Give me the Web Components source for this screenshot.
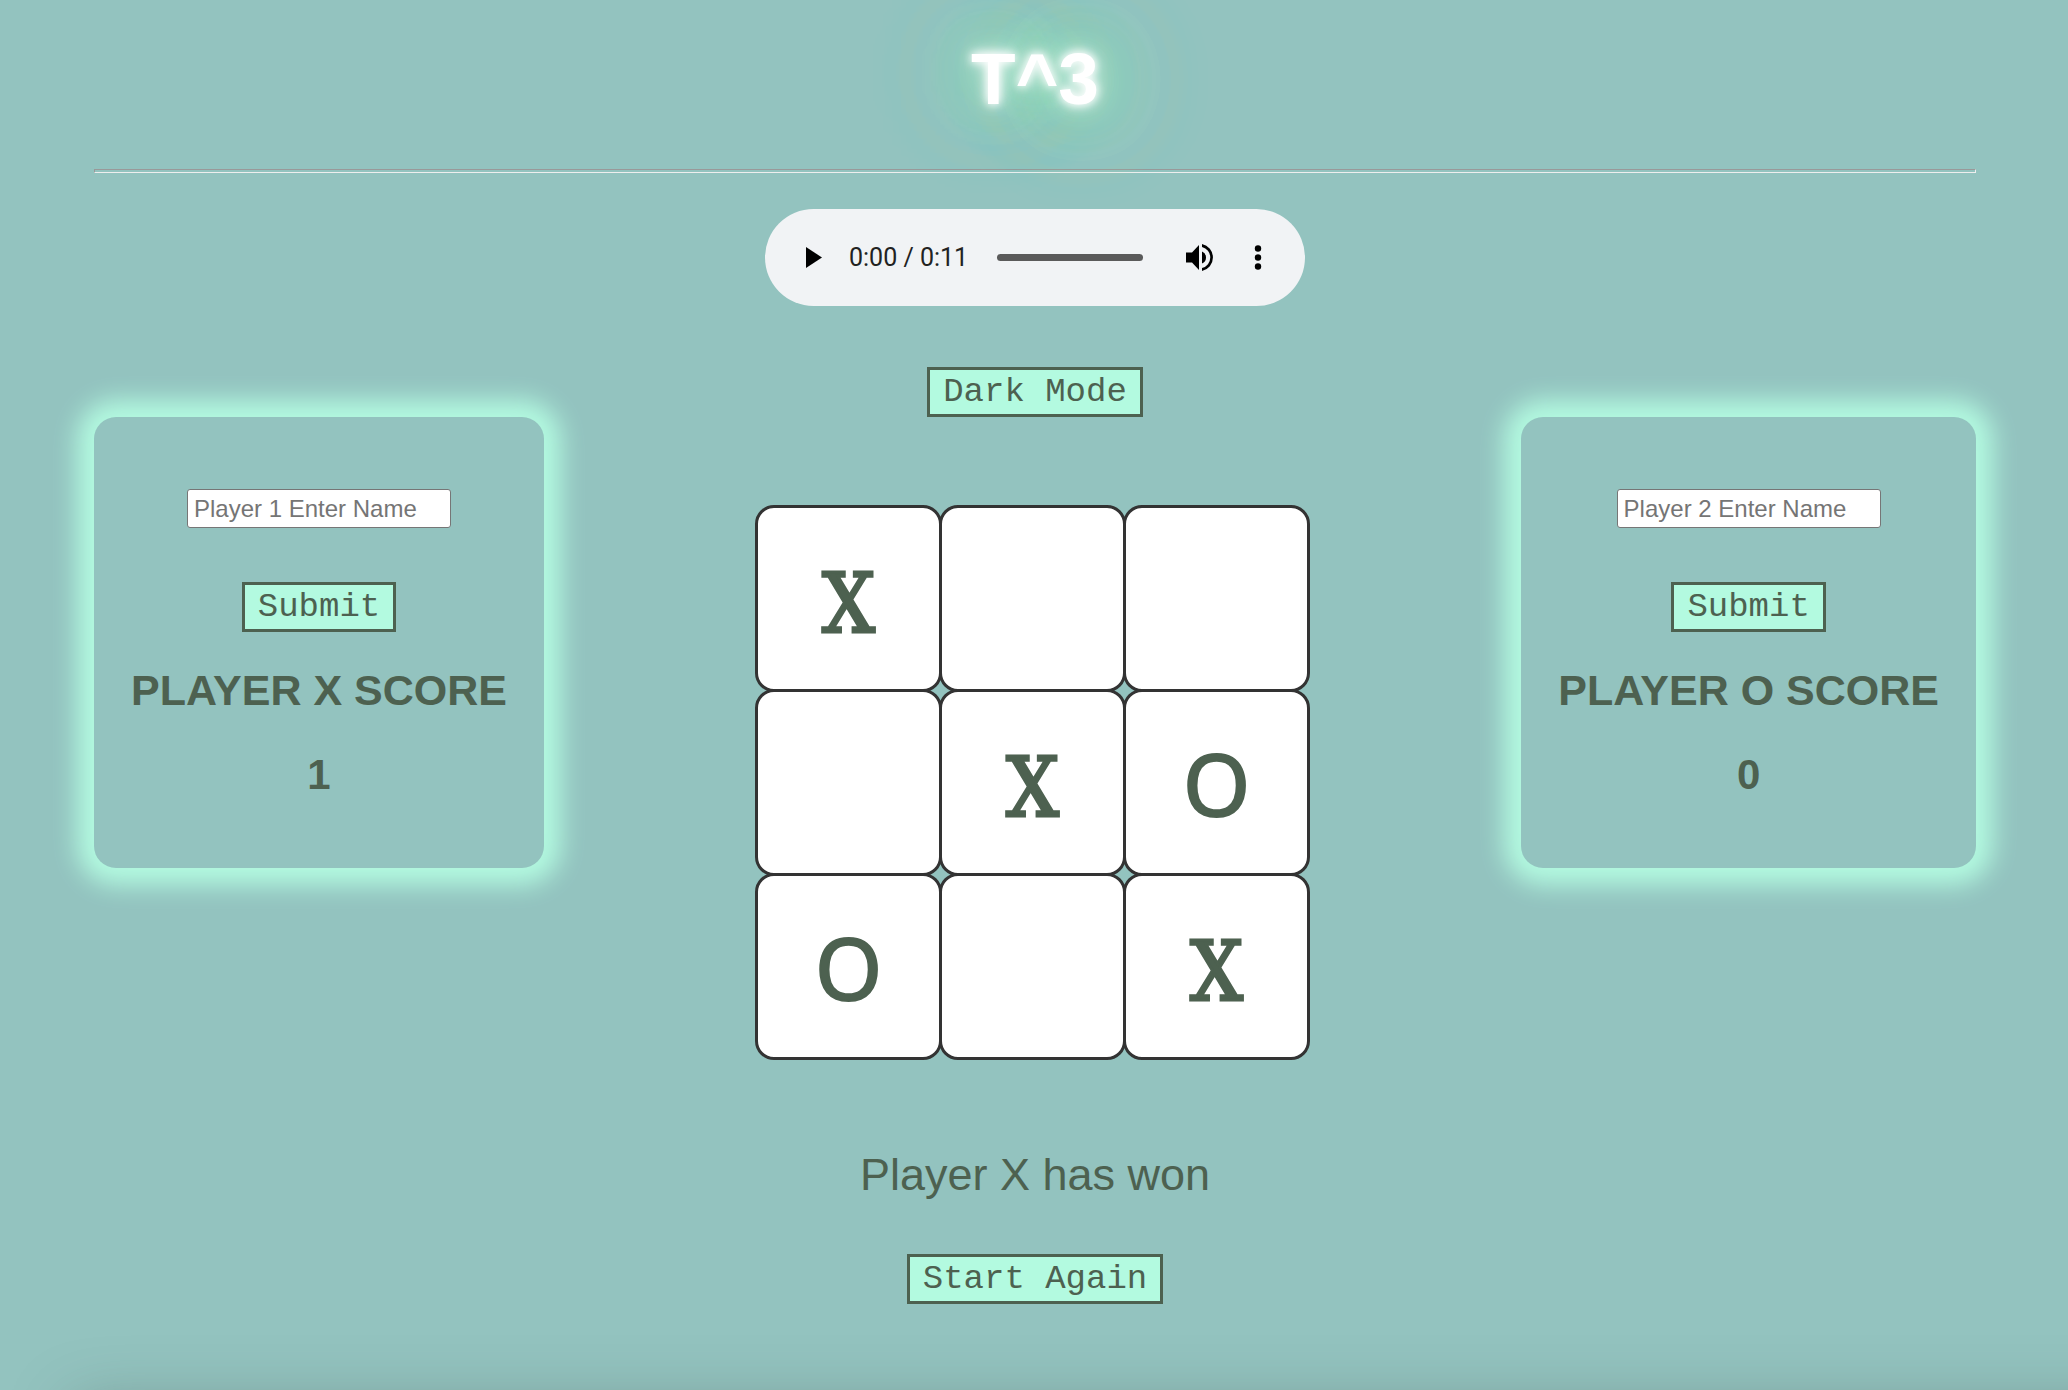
<!DOCTYPE html>
<html lang="en">
<head>
<meta charset="utf-8">
<title>T^3</title>
<style>
  html { height: 100%; }
  body {
    margin: 0;
    min-height: 100%;
    background: #93c3bf;
    color: #4d6150;
    font-family: "Liberation Sans", Arial, sans-serif;
  }
</style>
</head>
<body>
<game-page></game-page>
<script>
const define = (name, html, setup) => customElements.define(name, class extends HTMLElement {
  connectedCallback() {
    if (this.shadowRoot) return;
    const root = this.attachShadow({ mode: "open" });
    const t = document.createElement("template");
    t.innerHTML = html;
    root.append(t.content.cloneNode(true));
    if (setup) setup(this, root);
  }
});

define("mint-button", `
<style>
  :host { display: block; }
  button {
    display: block;
    box-sizing: border-box;
    height: 50px;
    margin: 0;
    padding: 0 13px;
    border: 3px solid #4d6150;
    border-radius: 0;
    background: #b3fae0;
    color: #4d6150;
    font: 34px/44px "Liberation Mono", "Courier New", monospace;
    white-space: nowrap;
    cursor: pointer;
  }
</style>
<button type="button"><slot></slot></button>`);

define("game-title", `
<style>
  :host { display: block; text-align: center; }
  h1 {
    margin: 0;
    padding: 37px 0 48px;
    color: #fff;
    font-size: 73px;
    line-height: 84px;
    text-shadow: 0 0 9px #fff, 0 0 14px #fff, 0 0 28px rgba(255,255,255,.7), 0 0 56px #80ffb0, 0 0 110px #80ffb0, 0 0 120px #80ffb0, 0 0 140px #80ffb0;
  }
  hr { height: 2px; margin: 0; border: 1px solid; border-color: #999 #eee #eee #999; }
</style>
<h1><slot></slot></h1>
<hr>`);

define("audio-player", `
<style>
  :host {
    display: flex;
    align-items: center;
    box-sizing: border-box;
    width: 540px;
    height: 97px;
    padding: 0 23px 0 24px;
    border-radius: 49px;
    background: #f1f3f5;
    color: #222;
    font: 25px/32px Roboto, sans-serif;
  }
  button { display: block; padding: 0; border: 0; background: none; width: 48px; height: 48px; flex: none; }
  svg { display: block; width: 48px; height: 48px; fill: #000; }
  time { flex: none; margin-left: 12px; white-space: nowrap; }
  input {
    appearance: none;
    flex: 1;
    min-width: 0;
    height: 7px;
    margin: 0 31px 0 29px;
    border-radius: 4px;
    background: #5a5a5a;
  }
  input::-webkit-slider-thumb { appearance: none; width: 0; height: 0; }
  .more { margin-left: 12px; }
</style>
<button type="button" aria-label="Play"><svg viewBox="0 0 48 48"><path d="M17 13v21l16-10.500z"/></svg></button>
<time>0:00 / 0:11</time>
<input type="range" aria-label="Position" min="0" max="11" value="0">
<button type="button" aria-label="Mute"><svg viewBox="0 0 48 48"><path d="M12 18.500v10h6l7 7.500v-25l-7 7.500zM28 17.500v12a6.500 6.500 0 0 0 0-12zM28 10v3a10.800 10.800 0 0 1 0 21v3a13.800 13.800 0 0 0 0-27z"/></svg></button>
<button type="button" class="more" aria-label="More options"><svg viewBox="0 0 48 48"><circle cx="24" cy="14.500" r="3.200"/><circle cx="24" cy="23.500" r="3.200"/><circle cx="24" cy="32.500" r="3.200"/></svg></button>`);

define("player-card", `
<style>
  :host {
    display: flex;
    flex-direction: column;
    align-items: center;
    box-sizing: border-box;
    padding: 72px 37px 69px;
    border-radius: 22px;
    box-shadow: 0 0 24px 17px #b3fae0;
  }
  input {
    box-sizing: border-box;
    width: 264px;
    height: 39px;
    padding: 0 6px;
    border: 1px solid #767676;
    border-radius: 3px;
    background: #fff;
    font: 24px "Liberation Sans", Arial, sans-serif;
  }
  input::placeholder { color: #757575; opacity: 1; }
  mint-button { margin-top: 54px; }
  h2 { margin: 33px 0 0; font-size: 43px; line-height: 50px; white-space: nowrap; }
  p { margin: 36px 0 0; font-size: 42px; line-height: 48px; font-weight: bold; }
</style>
<input type="text">
<mint-button>Submit</mint-button>
<h2><slot></slot></h2>
<p><slot name="score"></slot></p>`, (el, root) => {
  const input = root.querySelector("input");
  input.placeholder = "Player " + el.getAttribute("number") + " Enter Name";
  input.setAttribute("aria-label", input.placeholder);
});

define("board-cell", `
<style>
  :host { display: block; width: 187px; height: 187px; }
  button {
    display: block;
    box-sizing: border-box;
    width: 100%;
    height: 100%;
    padding: 0;
    border: 3px solid #333;
    border-radius: 19px;
    background: #fff;
    color: #4d6150;
  }
  .x { padding-top: 10px; font: 82px "DejaVu Serif Condensed", "DejaVu Serif", serif; -webkit-text-stroke: 3px #4d6150; }
  .o { font: 86px "Noto Sans", sans-serif; -webkit-text-stroke: 2px #4d6150; }
</style>
<button type="button"></button>`, (el, root) => {
  const mark = el.getAttribute("mark") || "";
  const button = root.querySelector("button");
  button.textContent = mark;
  if (mark) button.className = mark.toLowerCase();
  else button.setAttribute("aria-label", "Empty square");
});

define("game-board", `
<style>
  :host {
    display: grid;
    grid-template-columns: repeat(3, 184px);
    grid-auto-rows: 184px;
    padding: 0 3px 3px 0;
  }
</style>
<board-cell mark="X"></board-cell><board-cell></board-cell><board-cell></board-cell>
<board-cell></board-cell><board-cell mark="X"></board-cell><board-cell mark="O"></board-cell>
<board-cell mark="O"></board-cell><board-cell></board-cell><board-cell mark="X"></board-cell>`);

define("game-page", `
<style>
  :host {
    display: flex;
    flex-direction: column;
    align-items: center;
    box-sizing: border-box;
    min-height: 100vh;
    padding: 0 92px 0 94px;
    overflow: hidden;
  }
  game-title { align-self: stretch; }
  audio-player { margin-top: 36px; }
  .mode { margin-top: 61px; }
  .arena {
    align-self: stretch;
    display: flex;
    justify-content: space-between;
    align-items: flex-start;
  }
  game-board { margin-top: 88px; }
  .status { margin: 89px 0 0; font-size: 45px; line-height: 52px; }
  .again { margin-top: 53px; }
  footer {
    align-self: stretch;
    margin: auto -300px 0 30px;
    box-shadow: 0 66px 64px 50px rgba(70,85,80,.4);
  }
</style>
<game-title>T^3</game-title>
<audio-player></audio-player>
<mint-button class="mode">Dark Mode</mint-button>
<section class="arena">
  <player-card number="1">PLAYER X SCORE<span slot="score">1</span></player-card>
  <game-board></game-board>
  <player-card number="2">PLAYER O SCORE<span slot="score">0</span></player-card>
</section>
<p class="status">Player X has won</p>
<mint-button class="again">Start Again</mint-button>
<footer></footer>`);
</script>
</body>
</html>
